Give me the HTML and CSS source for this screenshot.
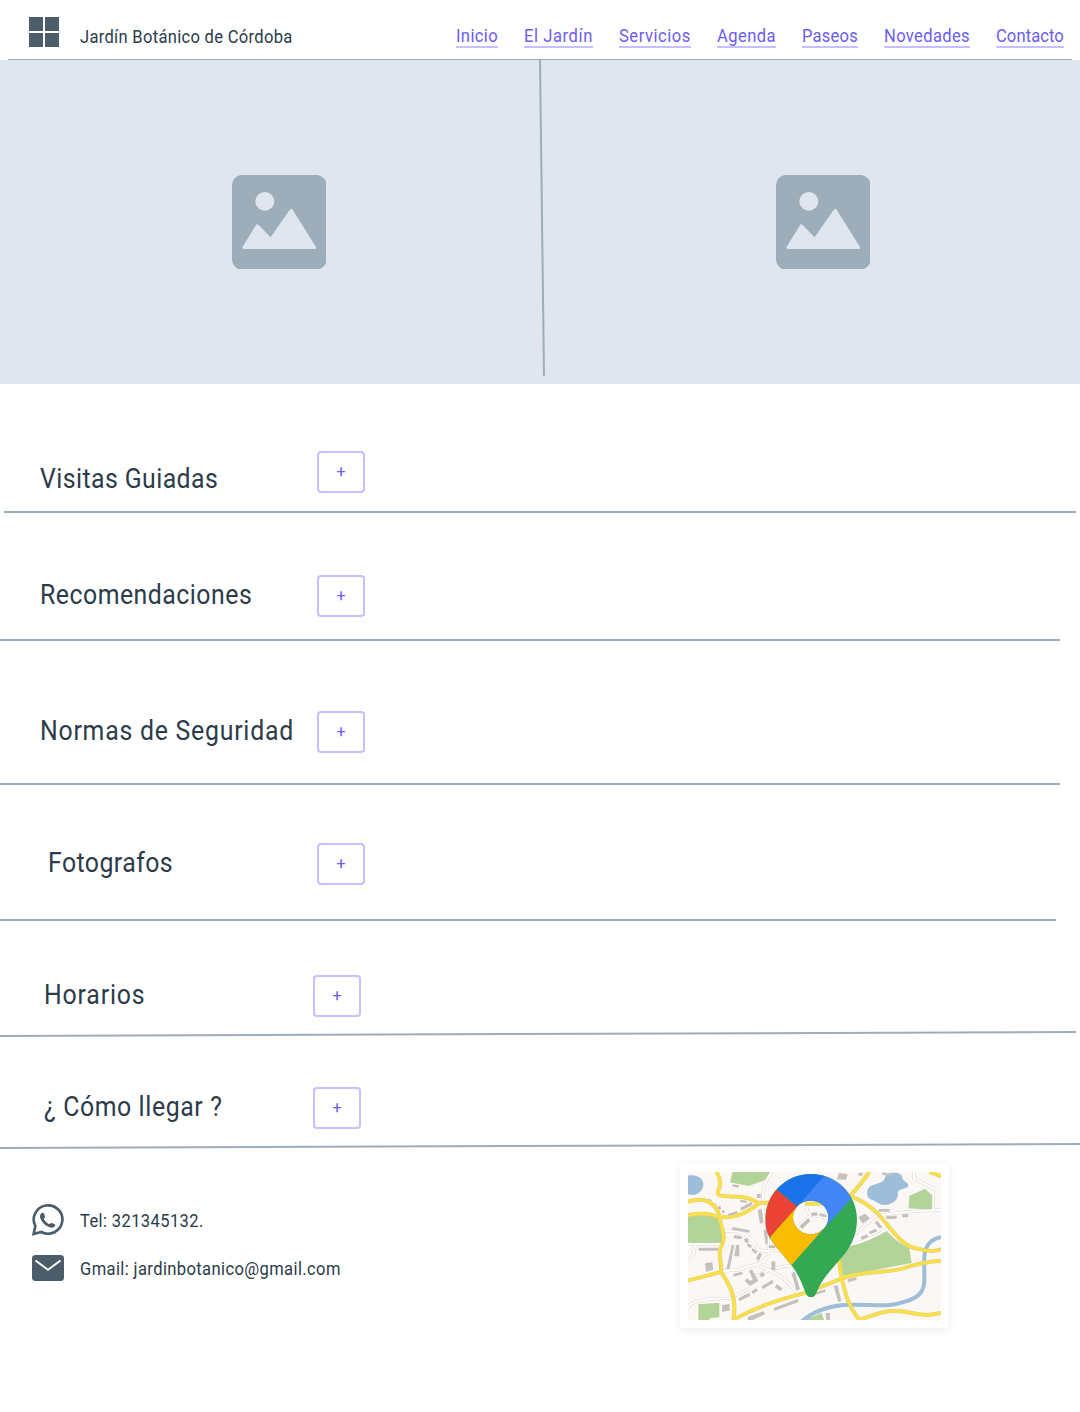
FILE: index.html
```html
<!DOCTYPE html>
<html lang="es">
<head>
<meta charset="utf-8">
<title>Jardín Botánico de Córdoba</title>
<link rel="stylesheet" href="styles.css">
</head>
<body>
<header class="header">
  <div class="brand">
    <svg class="logo" viewBox="0 0 30 30"><path d="M0 0h14v14H0zM16 0h14v14H16zM0 16h14v14H0zM16 16h14v14H16z"/></svg>
    <span class="brand-name narrow">Jardín Botánico de Córdoba</span>
  </div>
  <nav class="nav">
    <a class="nav-inicio"><span class="narrow">Inicio</span></a>
    <a class="nav-jardin"><span class="narrow">El Jardín</span></a>
    <a class="nav-servicios"><span class="narrow">Servicios</span></a>
    <a class="nav-agenda"><span class="narrow">Agenda</span></a>
    <a class="nav-paseos"><span class="narrow">Paseos</span></a>
    <a class="nav-novedades"><span class="narrow">Novedades</span></a>
    <a class="nav-contacto"><span class="narrow">Contacto</span></a>
  </nav>
</header>

<section class="hero">
  <svg class="picture" viewBox="0 0 95 95"><rect width="95" height="95" rx="10" class="picture-frame"/><circle cx="33" cy="26.500" r="9.500"/><path d="M12 73L25.500 51L39 65L59.500 35.500L83 73Z" class="peaks"/></svg>
  <svg class="picture" viewBox="0 0 95 95"><rect width="95" height="95" rx="10" class="picture-frame"/><circle cx="33" cy="26.500" r="9.500"/><path d="M12 73L25.500 51L39 65L59.500 35.500L83 73Z" class="peaks"/></svg>
  <svg class="hero-divider" viewBox="0 0 8 316"><path d="M2 0L6 316"/></svg>
</section>

<main>
  <section class="row row-visitas"><h2><span class="narrow">Visitas Guiadas</span></h2><button>+</button></section>
  <section class="row row-recomendaciones"><h2><span class="narrow">Recomendaciones</span></h2><button>+</button></section>
  <section class="row row-normas"><h2><span class="narrow">Normas de Seguridad</span></h2><button>+</button></section>
  <section class="row row-fotografos"><h2><span class="narrow">Fotografos</span></h2><button>+</button></section>
  <section class="row row-horarios"><h2><span class="narrow">Horarios</span></h2><button>+</button></section>
  <svg class="rule" viewBox="0 0 1080 6"><path d="M0 5L1076 1"/></svg>
  <section class="row row-llegar"><h2><span class="narrow">¿ Cómo llegar ?</span></h2><button>+</button></section>
  <svg class="rule" viewBox="0 0 1080 6"><path d="M0 5L1080 1"/></svg>
</main>

<footer class="footer">
  <div class="contact">
    <div class="contact-line">
      <svg class="icon-phone" viewBox="0 0 96 96">
        <path class="bubble" d="M5 90L10 66A43 42.500 0 1 1 28 84Z"/>
        <path d="M27 29C31 24 36 26 37 31L39 38C39 42 35 43 36 46C40 53 44 57 50 60C53 61 56 56 59 57L67 60C71 62 70 66 67 68C62 73 53 71 46 67C36 62 28 52 25 43C23 37 24 32 27 29Z"/>
      </svg>
      <span class="phone narrow">Tel: 321345132.</span>
    </div>
    <div class="contact-line">
      <svg class="icon-mail" viewBox="0 0 32 26"><rect width="32" height="26" rx="3.500"/><path d="M3.500 5.500L16 14.800L28.500 5.500"/></svg>
      <span class="mail narrow">Gmail: jardinbotanico@gmail.com</span>
    </div>
  </div>

  <div class="map-card">
    <svg class="map" viewBox="54 51 759 444" preserveAspectRatio="none">
      <defs>
        <clipPath id="pin"><path clip-rule="evenodd" d="M423 57C499 57 561 118 561 193C561 235 547 267 524 297C492 336 459 365 441 409C437 420 434 427 423 427C412 427 409 419 405 409C393 376 382 353 364 331L311 266C295 244 286 222 286 194C286 118 347 57 423 57ZM422 137C393 137 369 159 369 187C369 215 393 238 422 238C452 238 475 215 475 187C475 159 452 137 422 137Z"/></clipPath>
        <g id="streets">
          <path d="M54 268H155"/><path d="M57 316Q75 300 75 268"/>
          <path d="M160 228C220 226 242 240 263 282C277 292 296 286 350 285"/>
          <path d="M156 348L205 345C240 328 270 334 295 306Q300 240 280 175Q270 90 306 51"/>
          <path d="M264 332Q345 360 378 412"/><path d="M232 380Q300 335 365 332"/>
          <path d="M535 271Q600 256 655 220"/><path d="M552 240L617 184"/>
          <path d="M610 184Q700 168 813 165"/><path d="M790 165V100L732 71V51"/>
          <path d="M54 455Q76 430 180 430L240 400"/>
          <path d="M380 220L422 180Q405 165 412 145"/><path d="M422 180L475 190"/>
        </g>
        <g id="roads">
          <path d="M139 51Q158 77 146 104C137 124 150 122 187 125Q232 123 265 144L325 142"/>
          <path d="M54 140C92 127 135 133 149 184C196 195 234 170 271 143"/>
          <path d="M54 181Q112 169 150 189C150 215 170 240 157 266C139 300 158 321 153 352"/>
          <path d="M54 377L153 351C174 383 190 410 192 440Q195 470 190 495"/>
          <path d="M190 494Q280 444 410 413L515 371C573 347 630 357 700 340Q750 322 813 317"/>
          <path d="M598 51Q570 92 540 122Q594 145 624 177C664 218 693 278 750 282Q775 293 813 283"/>
          <path d="M502 290Q510 330 515 371C530 430 538 457 568 495"/>
          <path d="M565 495C610 483 640 463 690 469C740 474 770 488 813 473"/>
          <path d="M778 51L813 63"/><path d="M405 146H455"/>
        </g>
      </defs>
      <rect x="54" y="51" width="759" height="444" fill="#fbf7f4"/>
      <g class="park">
        <path d="M188 51H308Q300 70 278 78L235 93L180 82Z"/>
        <path d="M54 180Q105 172 143 190L162 245L154 267H54Z"/>
        <path d="M506 290L540 269Q600 256 650 228Q680 262 718 280L725 324L600 348L515 362Z"/>
        <path d="M718 123L765 101L789 124V165L716 160Z"/>
        <path d="M85 448L148 443V487L119 490V495H85Z"/>
        <path d="M405 495L455 474L462 495Z"/>
      </g>
      <g class="lake">
        <path d="M54 62C76 58 98 67 100 86C101 105 85 118 69 120L54 118Z"/>
        <path d="M650 58C664 50 693 52 697 67C695 78 714 80 715 92C712 104 690 98 683 111C688 128 675 145 650 149C630 153 617 137 600 132C588 123 588 102 601 94C618 84 636 85 642 74Z"/>
      </g>
      <path class="river" d="M395 500Q440 458 520 450C600 446 650 460 705 440C752 427 765 405 763 365C764 320 755 282 785 258Q800 248 813 246"/>
      <use href="#streets" class="street-edge"/>
      <use href="#streets" class="street"/>
      <g class="building">
        <path d="M188 216L240 226L238 233L186 224ZM193 240L216 244L214 253L190 249ZM185 270H193L179 342H169ZM198 270H208V304H193ZM86 278H144V287H86ZM105 325L127 321L130 344L108 351ZM221 253L232 248L237 260L227 265ZM235 264L246 273L241 280L229 271ZM248 279L262 290L256 297L244 286ZM263 165L275 161L280 202L270 207ZM281 226L293 223V263L287 270ZM258 309L268 293L277 296L266 319ZM296 271H316V279H296ZM304 319H316V345H304ZM191 356L217 350V358L190 365ZM237 348L246 343L265 378L240 393L224 378L230 370L242 378L248 372ZM268 357L280 351L285 361L274 367ZM274 395L307 374L311 383L279 402ZM205 430L238 413L241 422L208 439ZM244 409L259 400L264 408L248 417ZM314 397L321 387L338 401L331 409ZM364 354L374 350L390 402L380 407ZM311 459L383 432L386 441L312 468ZM234 485L280 469L286 477L248 495H234ZM157 450L179 447V467L156 470ZM437 412L466 403V410L439 419ZM491 393L503 390L514 438L505 442ZM533 373L559 366V375L535 382ZM466 474H480V495H469ZM388 214L414 190L421 198L397 222ZM424 173L442 172V182H424ZM449 175L469 179V187L449 184Z"/>
        <path d="M565 187L585 176L600 190L578 206ZM572 246L591 238L595 246L576 254ZM597 230L617 221L622 229L600 238ZM614 203L622 197L637 216L629 221ZM626 162H659V170H626ZM649 183L680 182V191L649 192ZM696 178L715 177V187H696ZM507 54L533 58L528 74L501 73ZM565 55L579 53L577 62H565ZM637 52L667 57V64L637 60ZM111 136L120 131L126 139L118 144ZM126 150L136 144L140 153L131 158ZM141 158L150 151L154 161L146 165ZM154 167L162 165L165 174H158ZM173 177L201 168L203 176L176 185ZM210 159L244 140L248 149L214 167ZM211 134L231 137V143L210 141ZM260 118L272 115V129H261ZM188 88L207 91L206 98L186 94Z"/>
      </g>
      <use href="#roads" class="road-edge"/>
      <use href="#roads" class="road"/>
      <g clip-path="url(#pin)">
        <rect x="280" y="50" width="290" height="380" fill="#34a853"/>
        <path d="M458 50H590V85L548 127L420 267L370 155Z" fill="#4285f4"/>
        <path d="M280 70L350 40H483L382 155Z" fill="#1a73e8"/>
        <path d="M270 60L318 103L382 155L300 247L270 275Z" fill="#ea4335"/>
        <path d="M300 247L390 145L470 211L364 331L330 310Z" fill="#fbbc04"/>
      </g>
    </svg>
  </div>
</footer>
</body>
</html>
```
FILE: styles.css
```css
* { box-sizing: border-box; }
body { margin: 0; background: #fff; color: #2b3b49; font-family: Roboto, sans-serif; font-size: 18px; line-height: 21px; }
.narrow { display: inline-block; white-space: nowrap; transform: scaleX(0.92); transform-origin: left; }

.header { height: 60px; margin: 0 8px; border-bottom: 1px solid #9eadba; display: flex; justify-content: space-between; align-items: flex-start; }
.brand { display: flex; padding: 17px 0 0 21px; gap: 21px; }
.logo { width: 30px; height: 30px; fill: #4b5c6b; }
.brand-name { padding-top: 9px; letter-spacing: 0.32px; }
.nav { display: flex; gap: 26px; padding: 25px 8px 0; }
.nav a { height: 23px; color: #6c5cf0; border-bottom: 2px solid #c7bfff; }
.nav-inicio { width: 42px; letter-spacing: 0.4px; }
.nav-jardin { width: 69px; letter-spacing: 0.62px; }
.nav-servicios { width: 72px; letter-spacing: 0.58px; }
.nav-agenda { width: 59px; letter-spacing: 0.46px; }
.nav-paseos { width: 56px; letter-spacing: 0.24px; }
.nav-novedades { width: 86px; letter-spacing: 0.37px; }
.nav-contacto { width: 68px; letter-spacing: 0.1px; }

.hero { position: relative; height: 324px; background: #dfe6ee; display: flex; gap: 449.5px; padding-left: 231.75px; align-items: center; }
.picture { width: 94.5px; height: 94.5px; fill: #dfe6ee; }
.picture-frame { fill: #9eadba; }
.peaks { stroke: #dfe6ee; stroke-width: 3; stroke-linejoin: round; }
.hero-divider { position: absolute; left: 538px; top: 0; width: 8px; height: 316px; fill: none; stroke: #9eadba; stroke-width: 2; }

.row { display: flex; align-items: flex-start; border-bottom: 2px solid #9eadba; }
.row h2 { margin: 4px 0 0; font-size: 27px; line-height: 32px; font-weight: 400; width: 277px; }
.row button { width: 48px; height: 42px; padding: 0; border: 2px solid #c7bfff; border-radius: 4px; background: #fff; color: #6c5cf0; font: 16px/38px Roboto, sans-serif; }

.row-visitas { height: 129px; margin: 0 4px; padding: 67px 0 0 36px; }
.row-visitas h2 { margin-top: 12px; letter-spacing: 0.46px; }
.row-recomendaciones { height: 128px; margin-right: 20px; padding: 62px 0 0 40px; }
.row-recomendaciones h2 { letter-spacing: 0.54px; }
.row-normas { height: 144px; margin-right: 20px; padding: 70px 0 0 40px; }
.row-normas h2 { letter-spacing: 0.83px; }
.row-fotografos { height: 136px; margin-right: 24px; padding: 58px 0 0 48px; }
.row-fotografos h2 { width: 269px; letter-spacing: 0.48px; }
.row-horarios { height: 110px; padding: 54px 0 0 44px; border: 0; }
.row-horarios h2 { width: 269px; letter-spacing: 0.9px; }
.row-llegar { height: 106px; padding: 50px 0 0 44px; border: 0; }
.row-llegar h2 { width: 269px; letter-spacing: 0.66px; }
.rule { display: block; width: 1080px; height: 6px; fill: none; stroke: #9eadba; stroke-width: 2; }

.footer { display: flex; justify-content: space-between; align-items: flex-start; padding: 15px 131px 84px 32px; }
.contact { padding-top: 32px; }
.contact-line { display: flex; align-items: center; gap: 16px; height: 48px; }
.contact-line svg { fill: #4b5c6b; }
.icon-phone { width: 32px; height: 32px; }
.icon-phone .bubble { fill: none; stroke: #4b5c6b; stroke-width: 8; }
.icon-mail { width: 32px; height: 26px; }
.icon-mail path { fill: none; stroke: #fff; stroke-width: 2; }
.phone { letter-spacing: 0.4px; }
.mail { letter-spacing: 0.41px; }

.map-card { width: 269px; height: 164px; padding: 8px; background: #fff; border-radius: 2px; box-shadow: 0 2px 8px rgba(0, 0, 0, 0.08); }
.map { display: block; width: 253px; height: 148px; }
.park { fill: #b2d498; }
.lake { fill: #9dbdd9; }
.river { fill: none; stroke: #9dbdd9; stroke-width: 12; }
.building { fill: #c6c0bd; }
.street-edge { fill: none; stroke: #d8d4d2; stroke-width: 9; }
.street { fill: none; stroke: #fff; stroke-width: 6; }
.road-edge { fill: none; stroke: #e3cf72; stroke-width: 12; }
.road { fill: none; stroke: #f8df4b; stroke-width: 9; }
```
